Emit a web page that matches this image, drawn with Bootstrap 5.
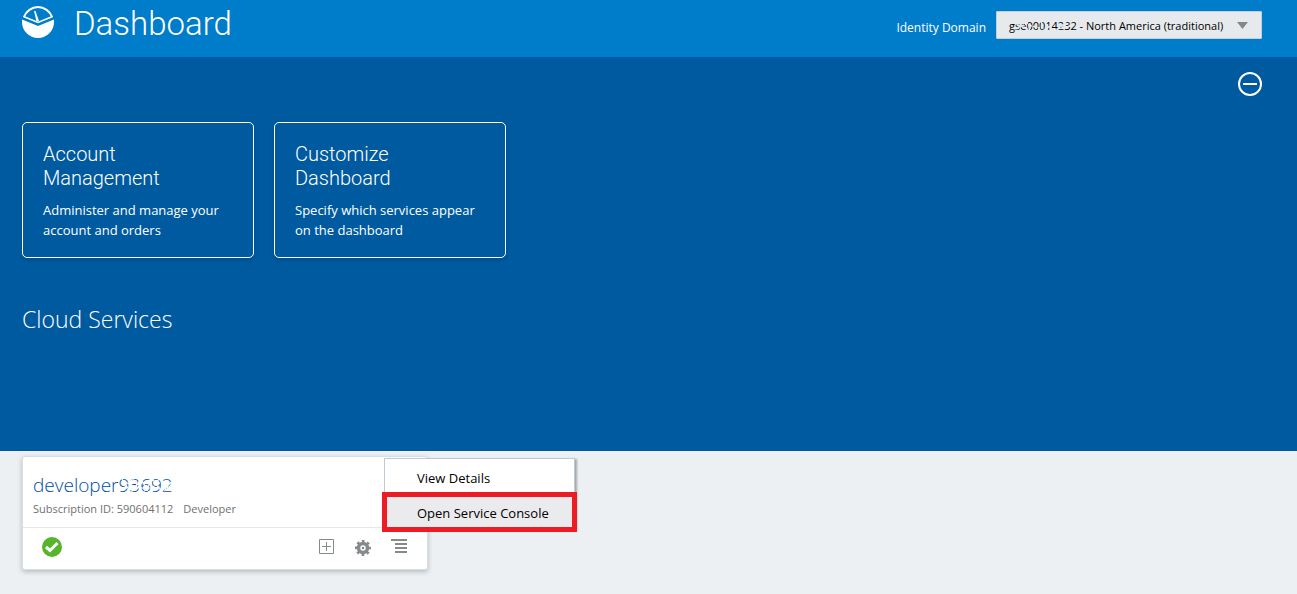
<!DOCTYPE html>
<html lang="en">
<head>
<meta charset="utf-8">
<meta name="viewport" content="width=device-width, initial-scale=1">
<title>Dashboard</title>
<link href="https://cdn.jsdelivr.net/npm/bootstrap@5.3.0/dist/css/bootstrap.min.css" rel="stylesheet">
<style>
  body { font-family: "Open Sans", "Noto Sans", sans-serif; font-size: 13px; line-height: 20px; background: #ecf0f3; color: #000; }
  .topbar { background: #007dca; min-height: 57px; padding: 0 35px 0 22px; }
  .brand-title { font: 300 33px/40px Roboto, sans-serif; }
  .domain { padding-top: 11px; gap: 10px; }
  .domain label { font-size: 12px; padding-top: 5px; }
  .domain-box { width: 266px; }
  .domain-select { display: block; appearance: none; width: 100%; height: 28px; padding: 2px 30px 0 12px; border: 1px solid #c4ced7; border-radius: 1px; background: #e7eaed; color: #000; font-size: 11px; }
  .domain-arrow { position: absolute; right: 14px; top: 11px; pointer-events: none; }
  .scrub { position: absolute; pointer-events: none; }
  .domain .scrub { left: 12px; top: 8px; }
  .service-name .scrub { right: 0; top: 4px; }
  .hero { background: #005a9f; padding: 15px 35px 117px 22px; }
  .tiles { gap: 20px; margin-top: 26px; }
  .tile { width: 232px; padding: 19px 20px 17px; border: 1px solid #fff; border-radius: 5px; color: #fff; box-shadow: 0 2px 4px rgba(0, 0, 0, .15); }
  .tile-title { font: 300 20px/24px Roboto, sans-serif; margin-bottom: 10px; }
  .section-title { font-size: 23px; line-height: 30px; font-weight: 300; margin: 46px 0 0; }
  .services { padding: 5px 22px 24px; }
  .service { width: 406px; background: #fff; border: 1px solid #d6dfe6; border-radius: 3px; box-shadow: 0 2px 5px rgba(0, 0, 0, .22); }
  .service-head { padding: 15px 10px 8px; border-bottom: 1px solid #e3e7ea; }
  .service-name { font-size: 19px; line-height: 26px; font-weight: 300; color: #00509f; }
  .service-meta { font-size: 11px; line-height: 20px; color: #707070; gap: 10px; padding-top: 1px; }
  .service-foot { height: 41px; padding: 0 19px 4px; }
  .tools { gap: 18px; }
  .actions { position: absolute; left: 361px; top: 1px; width: 191px; background: #fff; border: 1px solid #bfcad3; box-shadow: 2px 1px 2px rgba(0, 0, 0, .3); }
  .action { padding: 2px 24px 0 32px; height: 36px; white-space: nowrap; }
  .action.current { height: 34px; background: #ebebed; outline: 5px solid #ed1c24; outline-offset: -2px; }
</style>
</head>
<body>
<header class="topbar d-flex justify-content-between align-items-start text-white">
  <div class="d-flex align-items-start">
    <svg class="mt-1" width="32" height="36" viewBox="0 0 32 36" aria-hidden="true">
      <path d="M1.900 13A15 15 0 0 1 30.100 13" fill="none" stroke="#fff" stroke-width="2"/>
      <path d="M1.500 12.500L16 18.500L30.500 12.500" fill="none" stroke="#fff" stroke-width="1.500"/>
      <path d="M12 7L13.500 7L17 17L14.500 17.500Z" fill="#fff"/>
      <path d="M0 15.500L16 22L32 15.500V18A16 16 0 0 1 0 18Z" fill="#fff"/>
    </svg>
    <h1 class="brand-title ms-3 ps-1 mb-0 mt-1">Dashboard</h1>
  </div>
  <div class="domain d-flex align-items-center">
    <label for="domain">Identity Domain</label>
    <div class="domain-box position-relative">
      <select id="domain" class="domain-select"><option>gse00014232 - North America (traditional)</option></select>
      <svg class="domain-arrow" width="11" height="7" viewBox="0 0 11 7" aria-hidden="true"><path d="M0 0H11L5.500 7Z" fill="#85888a"/></svg>
      <svg class="scrub" width="68" height="14" viewBox="0 0 68 14" aria-hidden="true"><path d="M7 4L22 11M8 10L20 4M33 1L35 12L46 4M37 4L45 11L66 6M49 11L58 3M20 6L32 9" fill="none" stroke="#e7eaed" stroke-width="1.500" stroke-dasharray="4 1"/></svg>
    </div>
  </div>
</header>
<main>
  <section class="hero text-white">
    <div class="d-flex justify-content-end">
      <button class="btn p-0 border-0 d-flex" type="button" aria-label="Collapse">
        <svg width="24" height="24" viewBox="0 0 24 24"><circle cx="12" cy="12" r="11" fill="none" stroke="#fff" stroke-width="2"/><path d="M5 12H19" stroke="#fff" stroke-width="2"/></svg>
      </button>
    </div>
    <div class="tiles d-flex flex-wrap">
      <a class="tile text-decoration-none" href="#">
        <h2 class="tile-title">Account<br>Management</h2>
        <p class="mb-0">Administer and manage your<br>account and orders</p>
      </a>
      <a class="tile text-decoration-none" href="#">
        <h2 class="tile-title">Customize<br>Dashboard</h2>
        <p class="mb-0">Specify which services appear<br>on the dashboard</p>
      </a>
    </div>
    <h2 class="section-title">Cloud Services</h2>
  </section>
  <section class="services">
    <article class="service position-relative">
      <div class="service-head">
        <a class="service-name d-inline-block position-relative text-decoration-none" href="#">developer93692
          <svg class="scrub" width="52" height="19" viewBox="0 0 52 19" aria-hidden="true"><path d="M1 3L10 17L20 3L28 17L38 3L50 12M1 14L12 3L22 17L32 4L42 17L50 6M0 7H50M0 12H50" fill="none" stroke="#fff" stroke-width="1.200" stroke-dasharray="3 1"/></svg>
        </a>
        <div class="service-meta d-flex"><span>Subscription ID: 590604112</span><span>Developer</span></div>
      </div>
      <div class="service-foot d-flex justify-content-between align-items-center">
        <svg width="20" height="20" viewBox="0 0 20 20" role="img" aria-label="Healthy"><circle cx="10" cy="10" r="10" fill="#57b52b"/><path d="M4 10L8 13.500L15.500 6" fill="none" stroke="#fff" stroke-width="3"/></svg>
        <div class="tools d-flex align-items-center">
          <button class="btn p-0 border-0 d-flex" type="button" aria-label="Expand"><svg width="18" height="18" viewBox="0 0 18 18"><path d="M1.500 1.500H15.500V15.500H1.500ZM8.500 4V13M4 8.500H13" fill="none" stroke="#858a8c"/></svg></button>
          <button class="btn p-0 border-0 d-flex" type="button" aria-label="Settings"><svg width="18" height="18" viewBox="0 0 18 18"><g transform="translate(9 10)" fill="none" stroke="#858a8c"><circle r="4.500" stroke-width="3.500"/><circle r="6.750" stroke-width="2.500" stroke-dasharray="2.650 2.650" stroke-dashoffset="1.325"/><circle r="1.300" fill="#858a8c" stroke="none"/></g></svg></button>
          <button class="btn p-0 border-0 d-flex" type="button" aria-label="Actions"><svg width="18" height="18" viewBox="0 0 18 18"><path d="M1 2H17M5 6H17M5 10H17M5 14H17" stroke="#858a8c" stroke-width="2"/></svg></button>
        </div>
      </div>
      <div class="actions">
        <a class="action d-flex align-items-center text-black text-decoration-none" href="#">View Details</a>
        <a class="action current d-flex align-items-center text-black text-decoration-none" href="#">Open Service Console</a>
      </div>
    </article>
  </section>
</main>
<script src="https://cdn.jsdelivr.net/npm/bootstrap@5.3.0/dist/js/bootstrap.bundle.min.js"></script>
</body>
</html>
